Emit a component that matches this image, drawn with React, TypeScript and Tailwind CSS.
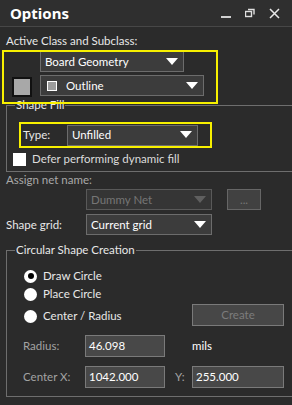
import React from 'react';

const Arrow = ({ disabled = false }: { disabled?: boolean }) => (
  <svg width="12" height="8" viewBox="0 0 12 8" className="ml-auto mr-[5px] shrink-0">
    <polygon points="0,0 12,0 6,7" fill={disabled ? '#5f5f5f' : '#ffffff'} />
  </svg>
);

function Dropdown({ w, children, disabled = false }: { w: string; children: React.ReactNode; disabled?: boolean }) {
  return (
    <div
      className={`${w} h-[21px] flex items-center pl-[4px] border ${
        disabled ? 'bg-[#353535] border-[#595959] text-[#767676]' : 'bg-[#3c3c3c] border-[#6c6c6c] text-white'
      }`}
    >
      {children}
      <Arrow disabled={disabled} />
    </div>
  );
}

function Radio({ checked = false }: { checked?: boolean }) {
  return (
    <span className="w-[13px] h-[13px] rounded-full bg-white flex items-center justify-center shrink-0">
      {checked && <span className="w-[6px] h-[6px] rounded-full bg-black" />}
    </span>
  );
}

export default function App() {
  return (
    <div className="w-[292px] h-[405px] overflow-hidden bg-[#2b2b2b] text-[11.5px] leading-[16px] text-[#e8e8e8] font-['Lato','Noto_Sans',sans-serif]">
      {/* title bar */}
      <div className="h-[27px] flex items-center pl-[10px] bg-[#2f2f2f] border-b border-[#474747]">
        <span className="text-[15px] font-bold text-white font-['Noto_Sans',sans-serif]">Options</span>
        <div className="ml-auto flex items-center gap-[13px] pr-[12px]">
          <svg width="11" height="12" viewBox="0 0 11 12">
            <rect x="0" y="9" width="10" height="2" fill="#d0d0d0" />
          </svg>
          <svg width="11" height="10" viewBox="0 0 11 10">
            <rect x="0.5" y="3.5" width="6" height="5" fill="none" stroke="#e0e0e0" strokeWidth="1.4" />
            <path d="M3 1.5 H9 V6.5" fill="none" stroke="#e0e0e0" strokeWidth="1.4" />
          </svg>
          <svg width="11" height="11" viewBox="0 0 11 11">
            <path d="M1 1 L10 10 M10 1 L1 10" stroke="#e8e8e8" strokeWidth="1.5" />
          </svg>
        </div>
      </div>

      <div className="mt-[6px] pl-[6px]">Active Class and Subclass:</div>

      {/* class / subclass */}
      <div className="relative mt-[1px] ml-[2px] w-[216px] h-[54px] z-20">
        <div className="pt-[1px] pl-[38px]">
          <Dropdown w="w-[144px]">Board Geometry</Dropdown>
        </div>
        <div className="mt-[3px] flex items-start">
          <div className="ml-[10px] mt-[2px] w-[20px] h-[20px] border-2 border-[#111111] bg-[#a8a8a8]" />
          <div className="ml-[8px]">
            <Dropdown w="w-[164px]">
              <span className="ml-[2px] w-[10px] h-[10px] border border-white bg-[#9c9c9c]" />
              <span className="ml-[9px]">Outline</span>
            </Dropdown>
          </div>
        </div>
        <div className="absolute inset-0 border-2 border-[#f7f000] pointer-events-none" />
      </div>

      {/* Shape Fill */}
      <div className="relative mt-[1px] ml-[6px] w-[300px] h-[67px] border-l border-t border-b border-[#6e6e6e]">
        <span className="absolute left-[8px] -top-[9px] px-[1px] bg-[#2b2b2b]">Shape Fill</span>
        <div className="relative ml-[12px] mt-[16px] w-[193px] h-[26px] flex items-center">
          <span className="w-[48px] pl-[4px]">Type:</span>
          <Dropdown w="w-[131px]">Unfilled</Dropdown>
          <div className="absolute inset-0 border-2 border-[#f7f000] pointer-events-none" />
        </div>
        <div className="mt-[3px] flex items-center">
          <span className="ml-[6px] w-[13px] h-[13px] bg-white" />
          <span className="ml-[6px] text-[#dcdcdc]">Defer performing dynamic fill</span>
        </div>
      </div>

      <div className="pl-[6px] text-[#a9a9a9]">Assign net name:</div>
      <div className="mt-[1px] flex">
        <div className="ml-[86px]">
          <Dropdown w="w-[126px]" disabled>
            Dummy Net
          </Dropdown>
        </div>
        <div className="ml-[15px] w-[34px] h-[21px] border border-[#666666] bg-[#414141] text-[#777777] flex items-center justify-center leading-none">
          ...
        </div>
      </div>
      <div className="mt-[4px] flex items-center">
        <span className="w-[86px] pl-[6px]">Shape grid:</span>
        <Dropdown w="w-[126px]">Current grid</Dropdown>
      </div>

      {/* Circular Shape Creation */}
      <div className="relative mt-[15px] ml-[6px] w-[300px] h-[147px] border-l border-t border-b border-[#6e6e6e]">
        <span className="absolute left-[8px] -top-[9px] px-[1px] bg-[#2b2b2b]">Circular Shape Creation</span>
        <div className="mt-[17px] ml-[17px] flex items-center gap-[6px]">
          <Radio checked />
          <span>Draw Circle</span>
        </div>
        <div className="mt-[2px] ml-[17px] flex items-center gap-[6px]">
          <Radio />
          <span>Place Circle</span>
        </div>
        <div className="mt-[2px] h-[22px] flex items-center">
          <div className="w-[185px] pl-[17px] flex items-center gap-[6px] pt-[2px]">
            <Radio />
            <span>Center / Radius</span>
          </div>
          <div className="w-[92px] h-[22px] border border-[#7a7a7a] bg-[#474747] text-[#7c7c7c] flex items-center justify-center">
            Create
          </div>
        </div>
        <div className="mt-[9px] flex items-center">
          <span className="w-[78px] pl-[16px] text-[#a3a3a3]">Radius:</span>
          <div className="w-[80px] h-[22px] border border-[#7a7a7a] bg-[#484848] text-white pl-[3px] flex items-center">46.098</div>
          <span className="ml-[27px] text-white">mils</span>
        </div>
        <div className="mt-[9px] flex items-center">
          <span className="w-[78px] pl-[16px] text-[#a3a3a3]">Center X:</span>
          <div className="w-[80px] h-[22px] border border-[#7a7a7a] bg-[#484848] text-white pl-[3px] flex items-center">1042.000</div>
          <span className="w-[27px] pl-[10px] text-[#a3a3a3]">Y:</span>
          <div className="w-[92px] h-[22px] border border-[#7a7a7a] bg-[#484848] text-white pl-[3px] flex items-center">255.000</div>
        </div>
      </div>
    </div>
  );
}
